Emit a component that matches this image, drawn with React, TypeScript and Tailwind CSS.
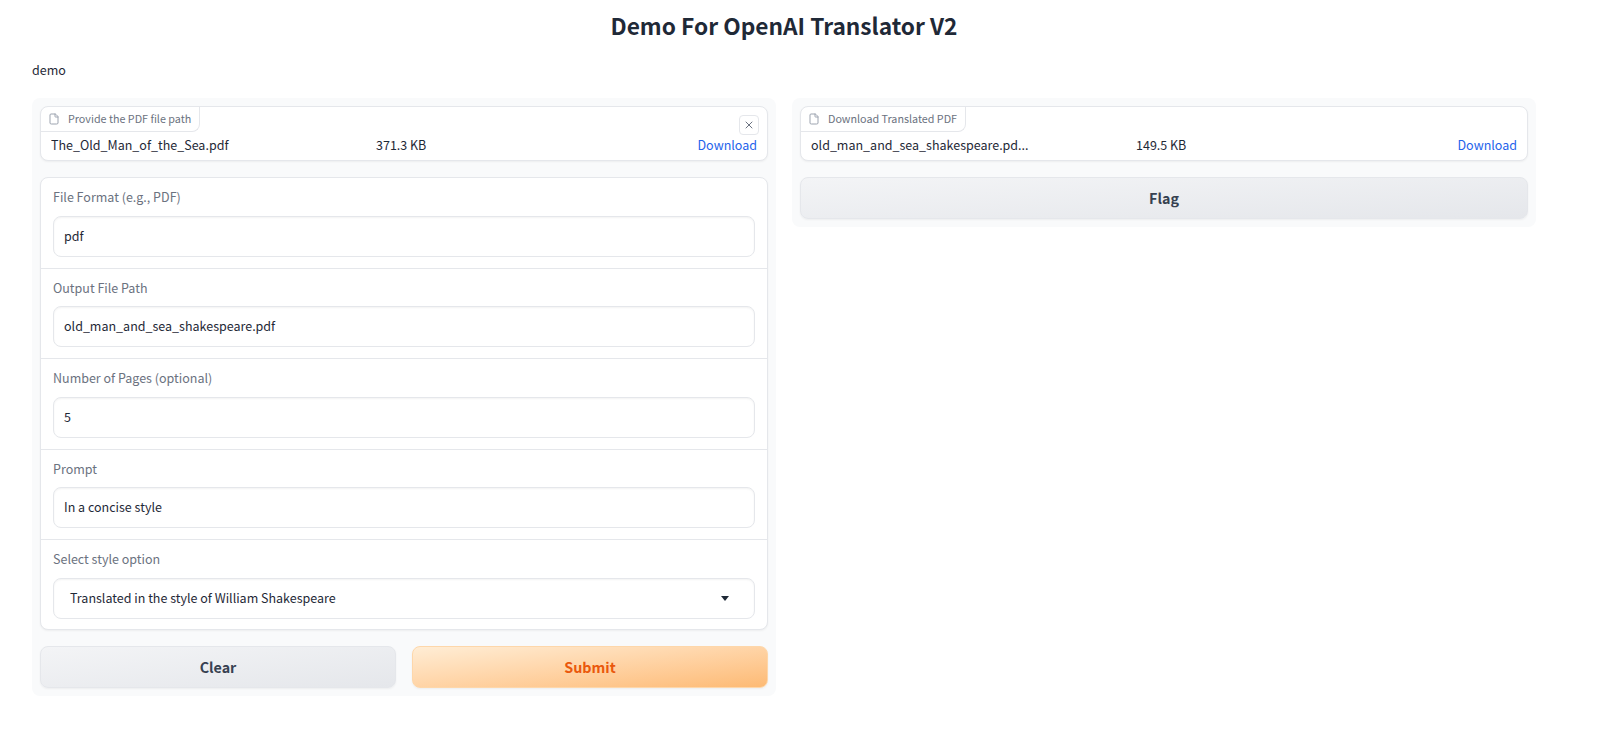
import React from 'react';
import { File, X } from 'lucide-react';

const fontClass = "font-['Noto_Sans_CJK_SC','Noto_Sans',sans-serif]";

const FileBlock: React.FC<{ label: string; name: string; size: string; closable?: boolean }> = ({ label, name, size, closable }) => (
  <div className="relative h-[55px] rounded-lg border border-[#e5e7eb] bg-white shadow-[0_1px_2px_rgba(0,0,0,0.05)]">
    <div className="flex h-[25px] w-fit items-center gap-2 rounded-br-lg border-r border-b border-[#e5e7eb] pr-2 pl-[7px] text-[10.75px] text-[#6b7280]">
      <File size={12} className="text-[#9ca3af]" />
      <span className="leading-none">{label}</span>
    </div>
    {closable && (
      <button className="absolute top-2 right-2 flex h-5 w-5 items-center justify-center rounded border border-[#e5e7eb] bg-white text-[#6b7280]">
        <X size={12} />
      </button>
    )}
    <div className="flex items-center px-[10px] pt-[1px] text-[12.5px] leading-6 text-[#1f2937]">
      <span className="w-[325px] truncate">{name}</span>
      <span>{size}</span>
      <a className="ml-auto text-[#2563eb]">Download</a>
    </div>
  </div>
);

const Field: React.FC<{ label: string; value: string }> = ({ label, value }) => (
  <div className="h-[90.5px] border-b border-[#e5e7eb] px-3 pt-[9px]">
    <div className="mb-[8.75px] text-[12.5px] leading-5 text-[#6b7280]">{label}</div>
    <div className="flex h-[41px] items-center rounded-lg border border-[#e5e7eb] px-[10px] text-[12.5px] text-[#1f2937] shadow-[inset_0_1px_2px_rgba(0,0,0,0.05)]">
      {value}
    </div>
  </div>
);

export default function App() {
  return (
    <div className={`${fontClass} min-h-[746px] bg-white px-8 text-[#1f2937]`}>
      <h1 className="pt-[9px] pr-8 text-center text-[22.7px] leading-[34px] font-semibold">Demo For OpenAI Translator V2</h1>
      <p className="mt-[17px] text-[12.5px] leading-5">demo</p>

      <div className="mt-[18px] flex items-start gap-4">
        {/* left column */}
        <div className="flex w-[744px] flex-col gap-4 rounded-lg bg-[#f9fafb] p-2">
          <FileBlock label="Provide the PDF file path" name="The_Old_Man_of_the_Sea.pdf" size="371.3 KB" closable />

          <div className="h-[453px] rounded-lg border border-[#e5e7eb] bg-white shadow-[0_1px_2px_rgba(0,0,0,0.05)]">
            <Field label="File Format (e.g., PDF)" value="pdf" />
            <Field label="Output File Path" value="old_man_and_sea_shakespeare.pdf" />
            <Field label="Number of Pages (optional)" value="5" />
            <Field label="Prompt" value="In a concise style" />
            <div className="px-3 pt-[9px]">
              <div className="mb-[8.75px] text-[12.5px] leading-5 text-[#6b7280]">Select style option</div>
              <div className="flex h-[41px] items-center justify-between rounded-lg border border-[#e5e7eb] pr-[11px] pl-4 text-[12.5px] text-[#1f2937] shadow-[inset_0_1px_2px_rgba(0,0,0,0.05)]">
                <span>Translated in the style of William Shakespeare</span>
                <svg width="8" height="5" viewBox="0 0 8 5" className="mr-[14px] fill-[#1f2937]">
                  <path d="M0 0h8L4 5z" />
                </svg>
              </div>
            </div>
          </div>

          <div className="flex gap-4">
            <button className="h-[42px] flex-1 rounded-lg border border-[#e5e7eb] bg-gradient-to-br from-[#f3f4f6] to-[#e5e7eb] text-[14.3px] font-semibold text-[#374151] shadow-[0_1px_2px_rgba(0,0,0,0.05)]">
              Clear
            </button>
            <button className="h-[42px] flex-1 rounded-lg border border-[#fed7aa] bg-gradient-to-br from-[#ffedd5] to-[#fdba74] text-[14.3px] font-semibold text-[#ea580c] shadow-[0_1px_2px_rgba(0,0,0,0.05)]">
              Submit
            </button>
          </div>
        </div>

        {/* right column */}
        <div className="flex w-[744px] flex-col gap-4 rounded-lg bg-[#f9fafb] p-2">
          <FileBlock label="Download Translated PDF" name="old_man_and_sea_shakespeare.pd..." size="149.5 KB" />
          <button className="h-[42px] rounded-lg border border-[#e5e7eb] bg-gradient-to-br from-[#f3f4f6] to-[#e5e7eb] text-[14.3px] font-semibold text-[#374151] shadow-[0_1px_2px_rgba(0,0,0,0.05)]">
            Flag
          </button>
        </div>
      </div>
    </div>
  );
}
